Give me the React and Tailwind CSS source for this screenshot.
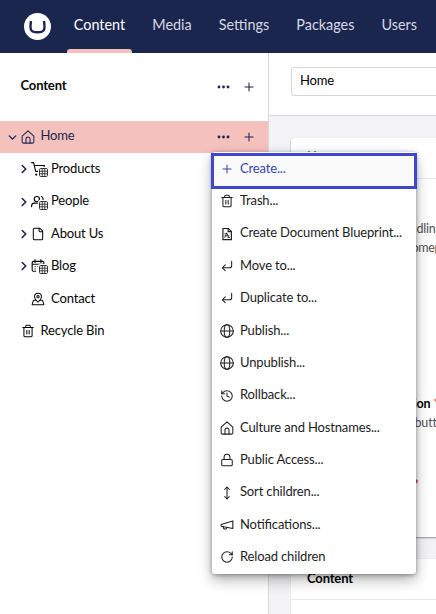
import React from 'react';
import {
  Plus, File, MapPinned, Trash2,
  ChevronDown, ChevronRight, CornerDownLeft, History, Lock, MoveVertical, RotateCw,
} from 'lucide-react';

const NAV = ['Content', 'Media', 'Settings', 'Packages', 'Users'];

function glyph(children) {
  return function Glyph({ size = 14, strokeWidth = 1.75, className }) {
    return (
      <svg
        width={size}
        height={size}
        viewBox="0 0 24 24"
        fill="none"
        stroke="currentColor"
        strokeWidth={strokeWidth}
        strokeLinecap="round"
        strokeLinejoin="round"
        className={className}
      >
        {children}
      </svg>
    );
  };
}

const Home = glyph(
  <>
    <path d="M2 10.500 12 1.500l10 9V20a2.500 2.500 0 0 1-2.500 2.500h-15A2.500 2.500 0 0 1 2 20z" />
    <path d="M8.500 22v-6.500a3.500 3.500 0 0 1 7 0V22" />
  </>
);

const Globe = glyph(
  <g strokeWidth="1.750">
    <circle cx="12" cy="12" r="10.800" />
    <ellipse cx="12" cy="12" rx="4.800" ry="10.800" />
    <path d="M1 12h22" />
  </g>
);

const Megaphone = glyph(
  <g strokeWidth="1.850">
    <path d="m2 11 20-6v13L2 14z" />
    <path d="M11.600 16.800a3 3 0 1 1-5.800-1.600" />
  </g>
);

const Cart = glyph(
  <g strokeWidth="1.900">
    <path d="M1 1h3.500l3.500 15h7" />
    <path d="M6 6h17l-1 4" />
    <circle cx="9" cy="21.500" r="1" />
  </g>
);

const People = glyph(
  <g strokeWidth="1.900">
    <circle cx="10" cy="7" r="4.500" />
    <path d="M1 20v-1a5 5 0 0 1 5-5h5M18 2.500a5 5 0 0 1 0 9" />
  </g>
);

const Calendar = glyph(
  <g strokeWidth="1.900">
    <path d="M8 21H4a2 2 0 0 1-2-2V6a2 2 0 0 1 2-2h16a2 2 0 0 1 2 2v3M7 1v5M17 1v5M2 9h20" />
    <path d="M7 13h.1M12 13h.1M7 17h.1" />
  </g>
);

const Blueprint = glyph(
  <g strokeWidth="2" strokeLinecap="butt" strokeLinejoin="miter">
    <path d="M14.500 2.500H5v19h14.500V7.500z" />
    <path d="M14 3v5h5" />
    <path d="M8 18.500 11.500 10l3.500 8.500M8 15h8M7.500 11.500h4M13 18h4" strokeWidth="1.400" />
  </g>
);

const TREE = [
  { label: 'Products', icon: Cart, arrow: true, grid: true },
  { label: 'People', icon: People, arrow: true, grid: true },
  { label: 'About Us', icon: File, arrow: true },
  { label: 'Blog', icon: Calendar, arrow: true, grid: true },
  { label: 'Contact', icon: MapPinned },
];

const ACTIONS = [
  ['Trash...', Trash2],
  ['Create Document Blueprint...', Blueprint],
  ['Move to...', CornerDownLeft],
  ['Duplicate to...', CornerDownLeft],
  ['Publish...', Globe],
  ['Unpublish...', Globe],
  ['Rollback...', History],
  ['Culture and Hostnames...', Home],
  ['Public Access...', Lock],
  ['Sort children...', MoveVertical],
  ['Notifications...', Megaphone],
  ['Reload children', RotateCw],
];

function GridBadge() {
  return (
    <svg className="absolute left-[7px] top-[5px]" width="11" height="11" viewBox="0 0 11 11">
      <rect width="11" height="11" rx="2" fill="#fff" />
      <rect x="1.500" y="1.500" width="8" height="8" rx="1.200" fill="none" stroke="#333" />
      <path d="M4.200 1.500v8M6.800 1.500v8M1.500 4.200h8M1.500 6.800h8" stroke="#333" strokeWidth="0.900" />
    </svg>
  );
}

function RowButtons() {
  return (
    <div className="ml-auto flex items-center gap-[12px] pr-[12px] text-[#1b264f]">
      <svg width="13" height="4" viewBox="0 0 13 4" fill="currentColor">
        <circle cx="2" cy="2" r="1.400" />
        <circle cx="6.500" cy="2" r="1.400" />
        <circle cx="11" cy="2" r="1.400" />
      </svg>
      <Plus size={14} strokeWidth={1.8} />
    </div>
  );
}

function Header() {
  return (
    <header className="flex h-[53px] shrink-0 bg-[#1b264f] pl-[24px] text-[14.400px] text-[#d5d8e2]">
      <svg className="mt-[13px] shrink-0" width="27" height="27" viewBox="0 0 27 27">
        <circle cx="13.5" cy="13.5" r="13.5" fill="#fff" />
        <path d="M7 8C5.600 17 6.500 19.200 13.500 19.200S21.400 17 20 8" fill="none" stroke="#1b264f" strokeWidth="2.400" />
      </svg>
      <nav className="ml-[16px] flex">
        {NAV.map((n, i) => (
          <div key={n} className={`relative flex items-center px-[6.800px] pb-[3px] ${i ? 'ml-[13.500px]' : 'text-white'}`}>
            {n}
            {i === 0 && <span className="absolute inset-x-0 bottom-0 h-[4px] rounded-t-[3px] bg-[#f5c1bc]" />}
          </div>
        ))}
      </nav>
    </header>
  );
}

function Sidebar() {
  return (
    <aside className="w-[269px] shrink-0 border-r border-[#d8d7d9] text-[13px] tracking-[-0.150px] text-[#060606]">
      <div className="flex h-[68px] items-center pl-[20.500px]">
        <b className="pb-[2px]">Content</b>
        <RowButtons />
      </div>
      <div className="flex h-[32px] items-center bg-[#f5c1bc] text-[#1b264f]">
        <ChevronDown className="ml-[6px]" size={13} strokeWidth={2.600} />
        <Home className="ml-[2px]" size={14} strokeWidth={1.750} />
        <span className="ml-[5.500px] pb-[2px]">Home</span>
        <RowButtons />
      </div>
      {TREE.map(({ label, icon: Icon, arrow, grid }) => (
        <div key={label} className="flex h-[32.400px] items-center">
          <span className="ml-[17px] w-[14px] text-[#1b264f]">{arrow && <ChevronRight size={14} strokeWidth={2.800} />}</span>
          <span className="relative">
            <Icon size={14} strokeWidth={1.750} />
            {grid && <GridBadge />}
          </span>
          <span className="ml-[6px] pb-[1px]">{label}</span>
        </div>
      ))}
      <div className="flex h-[32.400px] items-center">
        <Trash2 className="ml-[21px]" size={14} strokeWidth={1.750} />
        <span className="ml-[5.500px] pb-[1px]">Recycle Bin</span>
      </div>
    </aside>
  );
}

function Workspace() {
  return (
    <main className="flex min-w-0 flex-1 flex-col overflow-hidden bg-[#f3f3f5] text-[13px]">
      <div className="h-[63px] shrink-0 border-b border-[#d8d7d9] bg-white pl-[22px] pt-[14px]">
        <div className="flex h-[29px] w-[200px] items-center rounded-[3px] border border-[#d8d7d9] pb-[2px] pl-[8px] tracking-[-0.150px]">Home</div>
      </div>
      <section className="ml-[22px] mt-[22px] h-[399px] w-[240px] shrink-0 rounded-[3px] bg-white shadow-[0_1px_2px_rgba(0,0,0,0.400)]">
        <h2 className="h-[41px] border-b border-[#e9e9eb] pl-[16px] pt-[9px] font-bold text-[#777]">Home</h2>
        <div className="pt-[40px] text-[12.500px] leading-[19px] tracking-[-0.200px] text-[#515054]">
          <p className="ml-[125.500px] whitespace-nowrap">dlin</p>
          <p className="ml-[120.500px] whitespace-nowrap tracking-[-0.300px]">omep</p>
        </div>
        <div className="pt-[137px] text-[12.500px] leading-[19px] tracking-[-0.150px] text-[#515054]">
          <p className="ml-[122.500px] whitespace-nowrap font-bold text-black">ion<span className="ml-[3px] font-normal text-[#d42054]">*</span></p>
          <p className="ml-[123.500px] whitespace-nowrap">butt</p>
          <p className="ml-[122.500px] mt-[43px] font-bold text-[#d42054]">*</p>
        </div>
      </section>
      <section className="ml-[22px] mt-[22px] h-[100px] w-[240px] shrink-0 rounded-[3px] bg-white shadow-[0_0_1px_rgba(0,0,0,0.300)]">
        <h2 className="h-[41px] border-b border-[#e9e9eb] pl-[16px] pt-[10px] font-bold tracking-[-0.150px]">Content</h2>
      </section>
    </main>
  );
}

function ContextMenu() {
  return (
    <div className="absolute left-[212px] top-[152px] h-[422px] w-[204px] rounded-[3px] bg-white text-[13px] tracking-[-0.150px] text-[#1c1c1e] shadow-[0_6px_14px_rgba(0,0,0,0.300),0_1px_4px_rgba(0,0,0,0.350)] [font-feature-settings:'liga'_1]">
      <div className="relative -ml-px mt-px flex h-[36px] w-[206px] items-center border-[3px] border-[#3f48cc] bg-[#fafafa] pb-[4px] pl-[6px] text-[#3544b1]">
        <Plus size={14} strokeWidth={1.750} />
        <span className="ml-[6px]">Create...</span>
      </div>
      <div className="-mt-[4px]">
        {ACTIONS.map(([label, Icon]) => (
          <div key={label} className="flex h-[32.400px] items-center pl-[8px]">
            <Icon size={14} strokeWidth={1.750} className="shrink-0" />
            <span className="ml-[6px] whitespace-nowrap pb-[1px]">{label}</span>
          </div>
        ))}
      </div>
    </div>
  );
}

export default function App() {
  return (
    <div className="relative flex h-[614px] w-[436px] flex-col overflow-hidden bg-white font-[Lato,sans-serif]">
      <Header />
      <div className="flex min-h-0 flex-1">
        <Sidebar />
        <Workspace />
      </div>
      <ContextMenu />
    </div>
  );
}
